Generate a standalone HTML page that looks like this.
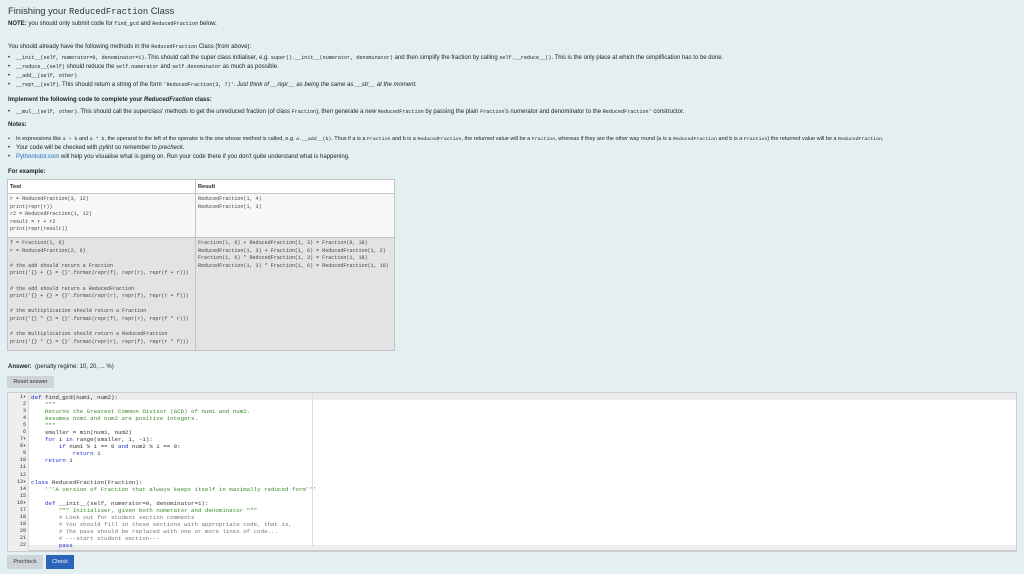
<!DOCTYPE html>
<html><head><meta charset="utf-8"><style>
*{margin:0;padding:0;box-sizing:border-box}
body{width:1024px;height:574px;background:#e4eff2;font-family:"Liberation Sans",sans-serif;color:#222;position:relative;overflow:hidden;font-size:6px}
.a{position:absolute;white-space:nowrap;line-height:7px}
code,.m{font-family:"Liberation Mono",monospace;font-size:5.1px}
b{font-weight:bold}
.bl{left:8px}
.bl:before{content:"•";position:absolute;left:0}
.bl>span{margin-left:8px}
table{position:absolute;left:7px;top:179px;width:388px;border-collapse:collapse;border:1px solid #bbb}
td,th{border:1px solid #c4c4c4;vertical-align:top;text-align:left;padding:2px 2px;font-size:5.6px}
th{background:#fff;height:14px;padding-top:4px}
td pre{font-family:"Liberation Mono",monospace;font-size:5.05px;line-height:7.6px;color:#444}
.btn{position:absolute;background:#cfd4d8;color:#333;font-size:5.6px;text-align:center}
.ed{position:absolute;left:7px;top:392px;width:1010px;height:160px;background:#fff;border:1px solid #ccc;border-bottom:2px solid #ccc}
.gut{position:absolute;left:0;top:0;width:21px;height:158px;background:#eee;border-right:1px solid #ddd}
.ln{position:absolute;font-family:"Liberation Mono",monospace;font-size:5.8px;line-height:7.05px;color:#333}
.cd{left:23px;top:1px;color:#333}
.g{color:#3a8a2a}.k{color:#2233cc}
</style></head><body>
<div class="a" style="left:8px;top:5px;font-size:9.4px;line-height:12px;color:#333">Finishing your <span style="font-family:'Liberation Mono',monospace;font-size:8.8px">ReducedFraction</span> Class</div>
<div class="a" style="left:8px;top:21px"><b>NOTE:</b> you should only submit code for <code>find_gcd</code> and <code>ReducedFraction</code> below.</div>
<div class="a" style="left:8px;top:44px">You should already have the following methods in the <code>ReducedFraction</code> Class (from above):</div>
<div class="a bl" style="top:55px"><span><code>__init__(self, numerator=0, denominator=1)</code>. This should call the super class initialiser, e.g. <code>super().__init__(numerator, denominator)</code> and then simplify the fraction by calling <code>self.__reduce__()</code>. This is the only place at which the simplification has to be done.</span></div>
<div class="a bl" style="top:64px"><span><code>__reduce__(self)</code> should reduce the <code>self.numerator</code> and <code>self.denominator</code> as much as possible.</span></div>
<div class="a bl" style="top:73px"><span><code>__add__(self, other)</code></span></div>
<div class="a bl" style="top:82px"><span><code>__repr__(self)</code>. This should return a string of the form <code>'ReducedFraction(3, 7)'</code>. <i>Just think of __repr__ as being the same as __str__ at the moment.</i></span></div>
<div class="a" style="left:8px;top:97px"><b>Implement the following code to complete your <i>ReducedFraction</i> class:</b></div>
<div class="a bl" style="top:109px"><span><code>__mul__(self, other)</code>. This should call the superclass' methods to get the unreduced fraction (of class <code>Fraction</code>), then generate a <i>new</i> <code>ReducedFraction</code> by passing the plain <code>Fraction</code>'s numerator and denominator to the <code>ReducedFraction'</code> constructor.</span></div>
<div class="a" style="left:8px;top:122px"><b>Notes:</b></div>
<div class="a bl" style="top:135.5px;font-size:5.5px"><span>In expressions like <code style="font-size:4.9px">a + b</code> and <code style="font-size:4.9px">a * b</code>, the operand to the left of the operator is the one whose method is called, e.g. <code style="font-size:4.9px">a.__add__(b)</code>. Thus if a is a <code style="font-size:4.9px">Fraction</code> and b is a <code style="font-size:4.9px">ReducedFraction</code>, the returned value will be a <code style="font-size:4.9px">Fraction</code>, whereas if they are the other way round (a is a <code style="font-size:4.9px">ReducedFraction</code> and b is a <code style="font-size:4.9px">Fraction</code>) the returned value will be a <code style="font-size:4.9px">ReducedFraction</code>.</span></div>
<div class="a bl" style="top:144.5px"><span>Your code will be checked with <i>pylint</i> so remember to <i>precheck</i>.</span></div>
<div class="a bl" style="top:153.5px"><span><span style="color:#2a6bc0">Pythontutor.com</span> will help you visualise what is going on. Run your code there if you don't quite understand what is happening.</span></div>
<div class="a" style="left:8px;top:169px"><b>For example:</b></div>
<table>
<tr><th style="width:188px">Test</th><th>Result</th></tr>
<tr style="background:#f7f7f7;height:44px"><td><pre>r = ReducedFraction(3, 12)
print(repr(r))
r2 = ReducedFraction(1, 12)
result = r + r2
print(repr(result))</pre></td><td><pre>ReducedFraction(1, 4)
ReducedFraction(1, 3)</pre></td></tr>
<tr style="background:#e3e3e3;height:113px"><td><pre>f = Fraction(1, 6)
r = ReducedFraction(2, 6)

# the add should return a Fraction
print('{} + {} = {}'.format(repr(f), repr(r), repr(f + r)))

# the add should return a ReducedFraction
print('{} + {} = {}'.format(repr(r), repr(f), repr(r + f)))

# the multiplication should return a Fraction
print('{} * {} = {}'.format(repr(f), repr(r), repr(f * r)))

# the multiplication should return a ReducedFraction
print('{} * {} = {}'.format(repr(r), repr(f), repr(r * f)))</pre></td><td><pre>Fraction(1, 6) + ReducedFraction(1, 3) = Fraction(9, 18)
ReducedFraction(1, 3) + Fraction(1, 6) = ReducedFraction(1, 2)
Fraction(1, 6) * ReducedFraction(1, 3) = Fraction(1, 18)
ReducedFraction(1, 3) * Fraction(1, 6) = ReducedFraction(1, 18)</pre></td></tr>
</table>
<div class="a" style="left:8px;top:364px"><b>Answer:</b> &nbsp;(penalty regime: 10, 20, ... %)</div>
<div class="btn" style="left:7px;top:376px;width:47px;height:12px;line-height:12px">Reset answer</div>
<div class="ed">
<div style="position:absolute;left:0;top:0;width:1008px;height:7px;background:#ebebeb"></div>
<div style="position:absolute;left:0;bottom:0;width:1008px;height:5px;background:#eee"></div>
<div class="gut"></div>
<div style="position:absolute;left:304px;top:0;width:1px;height:153px;background:#ddd"></div>
<pre class="ln" style="left:1px;top:1px;text-align:right;width:17px;font-size:5px"> 1▾
2
3
4
5
6
7▾
8▾
9
10
11
12
13▾
14
15
16▾
17
18
19
20
21
22</pre>
<pre class="ln cd"><span class="k">def</span> find_gcd(num1, num2):
    <span class="g">"""</span>
<span class="g">    Returns the Greatest Common Divisor (GCD) of num1 and num2.
    Assumes num1 and num2 are positive integers.
    """</span>
    smaller = min(num1, num2)
    <span class="k">for</span> i <span class="k">in</span> range(smaller, 1, -1):
        <span class="k">if</span> num1 % i == 0 <span class="k">and</span> num2 % i == 0:
            <span class="k">return</span> i
    <span class="k">return</span> 1


<span class="k">class</span> ReducedFraction(Fraction):
<span class="g">    '''A version of Fraction that always keeps itself in maximally reduced form'''</span>

    <span class="k">def</span> __init__(self, numerator=0, denominator=1):
<span class="g">        """ Initialiser, given both numerator and denominator """</span>
<span style="color:#777">        # Look out for student section comments
        # You should fill in these sections with appropriate code, that is,
        # The pass should be replaced with one or more lines of code...
        # ---start student section---</span>
        <span class="k">pass</span></pre>
</div>
<div class="btn" style="left:7px;top:555px;width:36px;height:14px;line-height:14px">Precheck</div>
<div class="btn" style="left:46px;top:555px;width:28px;height:14px;line-height:14px;background:#2c64b8;color:#fff">Check</div>
</body></html>
